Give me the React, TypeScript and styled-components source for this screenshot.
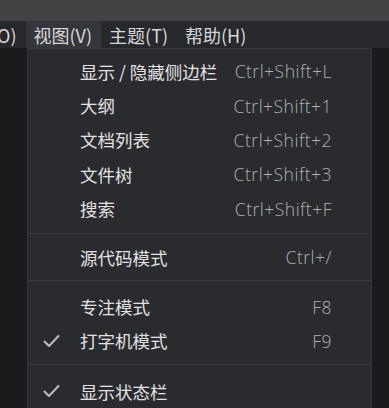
import React from "react";
import styled, { createGlobalStyle } from "styled-components";

const Global = createGlobalStyle`
  html, body { margin: 0; padding: 0; background: #1b1b1b; }
  body { font-family: "Noto Sans", "Noto Sans CJK SC", sans-serif; }
  #root { width: 389px; height: 408px; overflow: hidden; }
`;

const Page = styled.div`
  position: relative;
  width: 389px;
  height: 408px;
  overflow: hidden;
  background: #1b1b1b;
  display: flex;
  flex-direction: column;
`;

const TitleBar = styled.div`
  height: 21px;
  background: #444343;
  flex-shrink: 0;
`;

const MenuBar = styled.div`
  height: 27px;
  background: #27282c;
  display: flex;
  align-items: stretch;
  flex-shrink: 0;
  margin-left: -17px;
`;

const BarItem = styled.div<{ $active?: boolean }>`
  padding: 1px 9px 0 8px;
  display: flex;
  align-items: center;
  font-family: "Noto Sans CJK SC", sans-serif;
  font-size: 18px;
  color: #d8d8d8;
  background: ${(p) => (p.$active ? "#35363b" : "transparent")};
  white-space: nowrap;
`;

const Body = styled.div`
  flex: 1;
  display: flex;
`;

const Dropdown = styled.div`
  position: absolute;
  left: 27px;
  top: 48px;
  width: 345px;
  height: 380px;
  background: #2a2b2f;
  border-top: 1px solid #3a3b40;
  border-left: 1px solid #34353a;
  border-right: 1px solid #34353a;
  box-sizing: border-box;
  padding-top: 5px;
  display: flex;
  flex-direction: column;
`;

const Item = styled.div`
  height: 34.4px;
  display: grid;
  grid-template-columns: 52px 1fr auto;
  align-items: center;
  padding-right: 39px;
  flex-shrink: 0;
`;

const Check = styled.div`
  display: flex;
  align-items: center;
  padding-left: 15px;
`;

const Label = styled.span`
  font-family: "Noto Sans CJK SC", sans-serif;
  font-size: 17.5px;
  color: #e2e2e2;
  white-space: nowrap;
`;

const Shortcut = styled.span`
  font-family: "Open Sans", "Noto Sans", sans-serif;
  font-size: 17.5px;
  font-weight: 300;
  letter-spacing: 0.5px;
  color: #b0b0b2;
  white-space: nowrap;
`;

const Separator = styled.div<{ $above: number; $below: number }>`
  height: 1px;
  background: #3b3c41;
  margin: ${(p) => p.$above}px 0 ${(p) => p.$below}px;
  flex-shrink: 0;
`;

const CheckMark = () => (
  <svg width="17" height="14" viewBox="0 0 17 14">
    <polyline
      points="1.5,7.5 6,12 15.5,2"
      fill="none"
      stroke="#bdbdbf"
      strokeWidth="2"
      strokeLinecap="round"
      strokeLinejoin="round"
    />
  </svg>
);

type Entry = { label: string; shortcut?: string; checked?: boolean };

const Row = ({ label, shortcut, checked }: Entry) => (
  <Item>
    <Check>{checked ? <CheckMark /> : null}</Check>
    <Label>{label}</Label>
    <Shortcut>{shortcut ?? ""}</Shortcut>
  </Item>
);

const group1: Entry[] = [
  { label: "显示 / 隐藏侧边栏", shortcut: "Ctrl+Shift+L" },
  { label: "大纲", shortcut: "Ctrl+Shift+1" },
  { label: "文档列表", shortcut: "Ctrl+Shift+2" },
  { label: "文件树", shortcut: "Ctrl+Shift+3" },
  { label: "搜索", shortcut: "Ctrl+Shift+F" },
];

export default function App() {
  return (
    <>
      <Global />
      <Page>
        <TitleBar />
        <MenuBar>
          <BarItem>(O)</BarItem>
          <BarItem $active>视图(V)</BarItem>
          <BarItem>主题(T)</BarItem>
          <BarItem>帮助(H)</BarItem>
        </MenuBar>
        <Body />
        <Dropdown>
          {group1.map((e) => (
            <Row key={e.label} {...e} />
          ))}
          <Separator $above={7} $below={6} />
          <Row label="源代码模式" shortcut="Ctrl+/" />
          <Separator $above={6} $below={8} />
          <Row label="专注模式" shortcut="F8" />
          <Row label="打字机模式" shortcut="F9" checked />
          <Separator $above={6} $below={9} />
          <Row label="显示状态栏" checked />
        </Dropdown>
      </Page>
    </>
  );
}
